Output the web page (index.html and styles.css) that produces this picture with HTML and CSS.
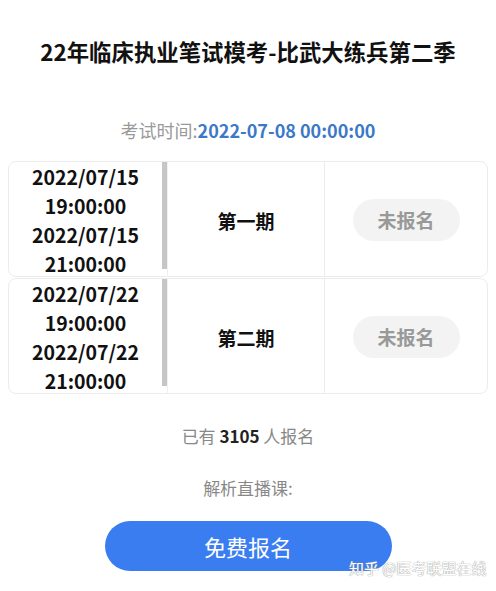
FILE: index.html
```html
<!DOCTYPE html>
<html lang="zh">
<head>
  <meta charset="UTF-8">
  <title>22年临床执业笔试模考</title>
  <meta name="viewport" content="width=device-width, initial-scale=1.0">
  <link rel="stylesheet" href="styles.css">
</head>
<body>

  <div id="page">
    <h1 class="title">22年临床执业笔试模考-比武大练兵第二季</h1>
    <div class="exam-time">考试时间:<span class="exam-date">2022-07-08 00:00:00</span></div>

    <div class="rounds">
      <div class="round">
        <div class="round-time">
          <div class="dates">2022/07/15<br>19:00:00<br>2022/07/15<br>21:00:00</div>
          <div class="bar"></div>
        </div>
        <div class="round-name">第一期</div>
        <div class="round-state"><span class="pill">未报名</span></div>
      </div>
      <div class="round">
        <div class="round-time">
          <div class="dates">2022/07/22<br>19:00:00<br>2022/07/22<br>21:00:00</div>
          <div class="bar"></div>
        </div>
        <div class="round-name">第二期</div>
        <div class="round-state"><span class="pill">未报名</span></div>
      </div>
    </div>

    <div class="count">已有 <b>3105</b> 人报名</div>
    <div class="live">解析直播课:</div>

    <button class="signup">免费报名</button>
  </div>

  <div class="watermark">知乎 @医考联盟在线</div>

</body>
</html>
```

FILE: styles.css
```css
body { margin: 0; background: #fff; font-family: "Noto Sans CJK SC", "Noto Sans", sans-serif; color: #111; }
#page { padding: 0 8px; text-align: center; }
.title {
  margin: 36px 0 0;
  font-size: 22.4px;
  line-height: 30px;
  font-weight: bold;
}
.exam-time {
  margin-top: 52px;
  font-size: 18px;
  line-height: 24px;
  color: #999;
}
.exam-date { color: #3b78c8; font-weight: bold; }
.rounds {
  margin-top: 19px;
  display: flex;
  flex-direction: column;
  gap: 1px;
}
.round {
  display: grid;
  grid-template-columns: 158px 158px 1fr;
  height: 116px;
  box-sizing: border-box;
  border: 1px solid #ececec;
  border-radius: 8px;
  overflow: hidden;
}
.round-time { display: flex; }
.dates {
  flex: 1;
  font-size: 19.5px;
  line-height: 29px;
  font-weight: bold;
  white-space: nowrap;
}
.bar {
  width: 5px;
  margin-bottom: 9px;
  background: #c6c6c6;
}
.round-name {
  display: flex;
  align-items: center;
  justify-content: center;
  border-left: 1px solid #f0f0f0;
  border-right: 1px solid #ececec;
  font-size: 19px;
  font-weight: bold;
}
.round-state {
  display: flex;
  align-items: center;
  justify-content: center;
}
.pill {
  width: 107px;
  height: 42px;
  line-height: 42px;
  border-radius: 21px;
  background: #f3f3f3;
  color: #999;
  font-size: 19px;
  font-weight: bold;
}
.count {
  margin-top: 30px;
  font-size: 17px;
  line-height: 24px;
  color: #888;
}
.count b { color: #222; }
.live {
  margin-top: 28px;
  font-size: 17px;
  line-height: 24px;
  color: #888;
}
.signup {
  margin-top: 21px;
  width: 287px;
  height: 50px;
  border: none;
  border-radius: 25px;
  background: #3a7df0;
  color: white;
  font-family: inherit;
  font-size: 22px;
}
.watermark {
  position: absolute;
  left: 349px;
  top: 557px;
  font-size: 15px;
  line-height: 22px;
  color: #fff;
  text-shadow: 0 0 1px #999, 0 0 1px #999;
  white-space: nowrap;
}
```
